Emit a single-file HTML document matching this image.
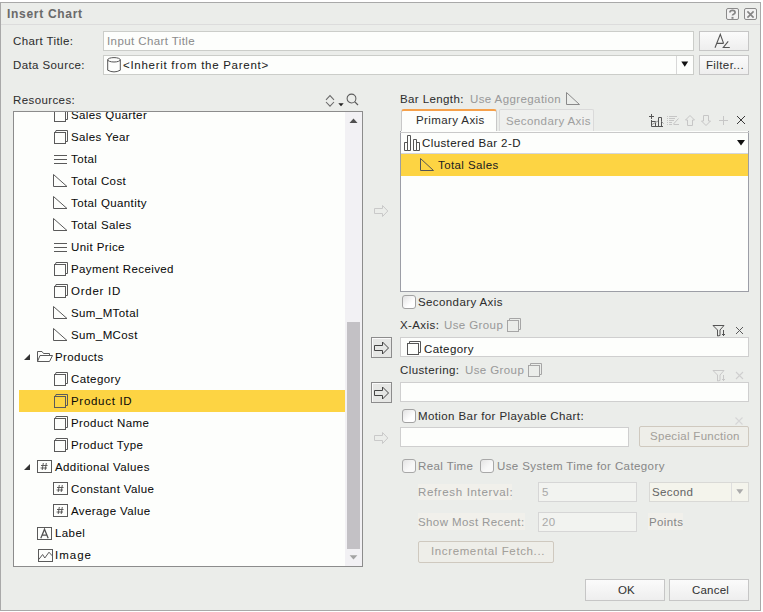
<!DOCTYPE html>
<html><head><meta charset="utf-8">
<style>
html,body{margin:0;padding:0;background:#fff;width:763px;height:612px;overflow:hidden}
body{font-family:"Liberation Sans",sans-serif;font-size:11.5px;letter-spacing:0.4px;color:#2e2e2e;-webkit-text-stroke-width:0.04px;position:relative}
.a{position:absolute}
.t{position:absolute;line-height:14px;white-space:nowrap}
svg{position:absolute;overflow:visible}
#dlg{position:absolute;left:0;top:2px;width:759px;height:607px;border:1px solid #a9a9a9;background:#ebedea}
.inp{position:absolute;background:#fdfefc;border:1px solid #cbcdc9;box-sizing:border-box}
.btn{position:absolute;box-sizing:border-box;border:1px solid #c6c6c6;background:linear-gradient(#fbfbfb,#eeeeee);text-align:center;line-height:20px;color:#333}
.cb{position:absolute;box-sizing:border-box;width:14px;height:14px;border:1px solid #8e8e8e;border-radius:3px;background:linear-gradient(135deg,#e9e9e9,#ffffff)}
.dis{color:#8c8c8c}
</style></head><body>
<div id="dlg"></div>
<!-- title bar -->
<div class="a" style="left:1px;top:24px;width:759px;height:1px;background:#dcdcdc"></div>
<div class="t" style="left:7px;top:7px;font-weight:bold;font-size:12px;letter-spacing:0.7px;color:#6a6a6a">Insert Chart</div>
<!-- help / close -->
<div class="a" style="left:726px;top:8px;width:11px;height:10px;border:1px solid #8a8a8a;border-radius:2px;background:#f2f2f2"></div>
<svg style="left:726px;top:8px" width="13" height="13"><path d="M3.9 4.6Q3.9 2.3 6.5 2.3Q9.1 2.3 9.1 4.4Q9.1 5.6 7.5 6.3Q6.5 6.8 6.5 7.6" fill="none" stroke="#858585" stroke-width="1.7"/><rect x="5.5" y="8.9" width="2" height="1.9" fill="#858585"/></svg>
<div class="a" style="left:744px;top:8px;width:11px;height:10px;border:1px solid #8a8a8a;border-radius:2px;background:#f2f2f2"></div>
<svg style="left:744px;top:8px" width="13" height="13"><path d="M3.4 3.4L9.6 9.6M9.6 3.4L3.4 9.6" stroke="#858585" stroke-width="1.6"/></svg>

<!-- top form -->
<div class="t" style="left:13px;top:34px">Chart Title:</div>
<div class="inp" style="left:103px;top:31px;width:591px;height:20px"></div>
<div class="t dis" style="left:107px;top:34px">Input Chart Title</div>
<div class="btn" style="left:699px;top:31px;width:50px;height:20px"></div>
<svg style="left:699px;top:31px" width="50" height="20"><path d="M16 16.7L21.3 3.2L24.6 12.4M17.4 12.4H24.6M29.2 10.4L24.3 16.5H30.8" stroke="#555" stroke-width="1.1" fill="none"/></svg>

<div class="t" style="left:13px;top:58px">Data Source:</div>
<div class="inp" style="left:103px;top:55px;width:591px;height:20px"></div>
<div class="a" style="left:676px;top:56px;width:1px;height:18px;background:#d8d8d8"></div>
<svg style="left:681px;top:61px" width="10" height="8"><path d="M0.3 0.5H7.2L3.75 5.8Z" fill="#111"/></svg>
<svg style="left:107px;top:57px" width="16" height="16"><ellipse cx="7" cy="2.8" rx="6.3" ry="2.2" fill="none" stroke="#555"/><path d="M0.7 2.8V13.2Q7 16.6 13.3 13.2V2.8" fill="none" stroke="#555"/></svg>
<div class="t" style="left:123px;top:58px;color:#222;letter-spacing:0.72px">&lt;Inherit from the Parent&gt;</div>
<div class="btn" style="left:699px;top:55px;width:50px;height:20px;line-height:18px;padding-left:2px">Filter...</div>

<div class="t" style="left:13px;top:93px">Resources:</div>
<div class="a" style="left:13px;top:111px;width:348px;height:454px;border:1px solid #8c8c8c;background:#fdfefc;overflow:hidden">
<div class="a" style="left:5px;top:278px;width:326px;height:22px;background:#fdd443"></div>
</div>
<div class="a" style="left:14px;top:112px;width:331px;height:454px;overflow:hidden"><div class="a" style="left:-14px;top:-112px;width:763px;height:612px"><svg style="left:54px;top:108px" width="15" height="15"><path d="M1.5 2.2L2 0.5H13.5V11.5H12" fill="none" stroke="#5a5a5a"/><rect x="0.5" y="2.5" width="11" height="11" fill="none" stroke="#5a5a5a"/></svg><div class="t" style="left:71px;top:108px;color:#0a0a0a">Sales Quarter</div><svg style="left:54px;top:130px" width="15" height="15"><path d="M1.5 2.2L2 0.5H13.5V11.5H12" fill="none" stroke="#5a5a5a"/><rect x="0.5" y="2.5" width="11" height="11" fill="none" stroke="#5a5a5a"/></svg><div class="t" style="left:71px;top:130px;color:#0a0a0a">Sales Year</div><svg style="left:54px;top:154px" width="15" height="15"><path d="M0 1.5H13M0 5.5H13M0 9.5H13" stroke="#5a5a5a"/></svg><div class="t" style="left:71px;top:152px;color:#0a0a0a">Total</div><svg style="left:53px;top:174px" width="16" height="15"><path d="M0.5 0.5L0.5 12.5L14 12.5Z" fill="none" stroke="#5a5a5a" stroke-linejoin="miter"/></svg><div class="t" style="left:71px;top:174px;color:#0a0a0a">Total Cost</div><svg style="left:53px;top:196px" width="16" height="15"><path d="M0.5 0.5L0.5 12.5L14 12.5Z" fill="none" stroke="#5a5a5a" stroke-linejoin="miter"/></svg><div class="t" style="left:71px;top:196px;color:#0a0a0a">Total Quantity</div><svg style="left:53px;top:218px" width="16" height="15"><path d="M0.5 0.5L0.5 12.5L14 12.5Z" fill="none" stroke="#5a5a5a" stroke-linejoin="miter"/></svg><div class="t" style="left:71px;top:218px;color:#0a0a0a">Total Sales</div><svg style="left:54px;top:242px" width="15" height="15"><path d="M0 1.5H13M0 5.5H13M0 9.5H13" stroke="#5a5a5a"/></svg><div class="t" style="left:71px;top:240px;color:#0a0a0a">Unit Price</div><svg style="left:54px;top:262px" width="15" height="15"><path d="M1.5 2.2L2 0.5H13.5V11.5H12" fill="none" stroke="#5a5a5a"/><rect x="0.5" y="2.5" width="11" height="11" fill="none" stroke="#5a5a5a"/></svg><div class="t" style="left:71px;top:262px;color:#0a0a0a">Payment Received</div><svg style="left:54px;top:284px" width="15" height="15"><path d="M1.5 2.2L2 0.5H13.5V11.5H12" fill="none" stroke="#5a5a5a"/><rect x="0.5" y="2.5" width="11" height="11" fill="none" stroke="#5a5a5a"/></svg><div class="t" style="left:71px;top:284px;color:#0a0a0a;letter-spacing:0.75px">Order ID</div><svg style="left:53px;top:306px" width="16" height="15"><path d="M0.5 0.5L0.5 12.5L14 12.5Z" fill="none" stroke="#5a5a5a" stroke-linejoin="miter"/></svg><div class="t" style="left:71px;top:306px;color:#0a0a0a">Sum_MTotal</div><svg style="left:53px;top:328px" width="16" height="15"><path d="M0.5 0.5L0.5 12.5L14 12.5Z" fill="none" stroke="#5a5a5a" stroke-linejoin="miter"/></svg><div class="t" style="left:71px;top:328px;color:#0a0a0a">Sum_MCost</div><div class="a" style="left:24px;top:354px;width:0;height:0;border-left:6px solid transparent;border-bottom:6px solid #333"></div><svg style="left:37px;top:350px" width="17" height="14"><path d="M0.5 11.5L0.5 1.5L5 1.5L6.5 3.5L12.5 3.5L12.5 5.5M0.5 11.5L3 5.5L15.5 5.5L12.5 11.5Z" fill="none" stroke="#5a5a5a"/></svg><div class="t" style="left:55px;top:350px;color:#0a0a0a">Products</div><svg style="left:54px;top:372px" width="15" height="15"><path d="M1.5 2.2L2 0.5H13.5V11.5H12" fill="none" stroke="#5a5a5a"/><rect x="0.5" y="2.5" width="11" height="11" fill="none" stroke="#5a5a5a"/></svg><div class="t" style="left:71px;top:372px;color:#0a0a0a">Category</div><svg style="left:54px;top:394px" width="15" height="15"><path d="M1.5 2.2L2 0.5H13.5V11.5H12" fill="none" stroke="#5a5a5a"/><rect x="0.5" y="2.5" width="11" height="11" fill="none" stroke="#5a5a5a"/></svg><div class="t" style="left:71px;top:394px;color:#0a0a0a;letter-spacing:0.7px">Product ID</div><svg style="left:54px;top:416px" width="15" height="15"><path d="M1.5 2.2L2 0.5H13.5V11.5H12" fill="none" stroke="#5a5a5a"/><rect x="0.5" y="2.5" width="11" height="11" fill="none" stroke="#5a5a5a"/></svg><div class="t" style="left:71px;top:416px;color:#0a0a0a">Product Name</div><svg style="left:54px;top:438px" width="15" height="15"><path d="M1.5 2.2L2 0.5H13.5V11.5H12" fill="none" stroke="#5a5a5a"/><rect x="0.5" y="2.5" width="11" height="11" fill="none" stroke="#5a5a5a"/></svg><div class="t" style="left:71px;top:438px;color:#0a0a0a">Product Type</div><div class="a" style="left:24px;top:464px;width:0;height:0;border-left:6px solid transparent;border-bottom:6px solid #333"></div><svg style="left:37px;top:460px" width="16" height="14"><rect x="0.5" y="0.5" width="14" height="12" fill="none" stroke="#5a5a5a"/><path d="M6.3 3L5.2 10M9.3 3L8.2 10M4 5.5H10.5M3.6 8H10" fill="none" stroke="#555" stroke-width="0.95"/></svg><div class="t" style="left:55px;top:460px;color:#0a0a0a">Additional Values</div><svg style="left:53px;top:482px" width="16" height="14"><rect x="0.5" y="0.5" width="14" height="12" fill="none" stroke="#5a5a5a"/><path d="M6.3 3L5.2 10M9.3 3L8.2 10M4 5.5H10.5M3.6 8H10" fill="none" stroke="#555" stroke-width="0.95"/></svg><div class="t" style="left:71px;top:482px;color:#0a0a0a">Constant Value</div><svg style="left:53px;top:504px" width="16" height="14"><rect x="0.5" y="0.5" width="14" height="12" fill="none" stroke="#5a5a5a"/><path d="M6.3 3L5.2 10M9.3 3L8.2 10M4 5.5H10.5M3.6 8H10" fill="none" stroke="#555" stroke-width="0.95"/></svg><div class="t" style="left:71px;top:504px;color:#0a0a0a">Average Value</div><svg style="left:37px;top:527px" width="16" height="14"><rect x="0.5" y="0.5" width="14" height="12" fill="none" stroke="#5a5a5a"/><path d="M3.8 11.2L7.5 2.2L11.2 11.2M5.1 8.2H9.9" fill="none" stroke="#505050" stroke-width="1.25"/></svg><div class="t" style="left:55px;top:526px;color:#0a0a0a">Label</div><svg style="left:38px;top:549px" width="16" height="14"><rect x="0.5" y="0.5" width="14" height="12" fill="none" stroke="#5a5a5a"/><path d="M0.8 10.5L4.6 5.5L6.8 9L11 3.2L14.2 6.8" fill="none" stroke="#5a5a5a"/></svg><div class="t" style="left:55px;top:548px;color:#0a0a0a;letter-spacing:1.0px">Image</div></div></div>
<div class="a" style="left:345px;top:112px;width:17px;height:454px;background:#f2f1f4"></div>
<div class="a" style="left:347px;top:322px;width:13px;height:227px;background:#c3c1c5"></div>
<svg style="left:349px;top:118px" width="9" height="6"><path d="M0.5 5L4.5 0.5L8.5 5Z" fill="#505050"/></svg>
<svg style="left:349px;top:555px" width="9" height="6"><path d="M0.6 0.2H8.4L4.5 4.4Z" fill="#a3a3a3"/></svg>
<svg style="left:325px;top:94px" width="11" height="13"><path d="M1 5.8L5 1.6L9 5.8M1 8L5 12.2L9 8" fill="none" stroke="#6a6a6a" stroke-width="1.05"/></svg>
<svg style="left:338px;top:103px" width="7" height="4"><path d="M0.3 0.3H5.7L3 3.2Z" fill="#222"/></svg>
<svg style="left:346px;top:93px" width="14" height="14"><circle cx="5.5" cy="5.5" r="4.4" fill="none" stroke="#5c5c5c" stroke-width="1.05"/><path d="M8.6 8.6L12 12" stroke="#5c5c5c" stroke-width="1.2"/></svg>
<div class="t" style="left:400px;top:92px;">Bar Length:</div>
<div class="t" style="left:470px;top:92px;color:#9a9a9a">Use Aggregation</div>
<svg style="left:566px;top:92px" width="15" height="14"><path d="M0.5 0.5L0.5 12.5L13.5 12.5Z" fill="none" stroke="#8a8a8a"/></svg>
<div class="a" style="left:499px;top:109px;width:95px;height:23px;box-sizing:border-box;border:1px solid #dadada;border-bottom:none;background:#eff0ee;border-radius:2px 2px 0 0"></div>
<div class="t" style="left:506px;top:114px;color:#a0a0a0">Secondary Axis</div>
<div class="a" style="left:401px;top:109px;width:96px;height:23px;box-sizing:border-box;border:1px solid #c8c8c8;border-top:2px solid #f6a14b;border-bottom:none;background:#fdfefc;border-radius:3px 3px 0 0"></div>
<div class="t" style="left:416px;top:113px;">Primary Axis</div>
<svg style="left:647px;top:112px" width="18" height="16"><path d="M2 4.5H7M4.5 2V7M4.5 8V14.5H16M4.5 9.5H8.5V14M11.5 14V5.5H14.5V14" fill="none" stroke="#555"/><path d="M5 12.5L11 9M14.5 9.5L16.5 11.5" fill="none" stroke="#999"/></svg>
<svg style="left:666px;top:115px" width="14" height="11"><path d="M1 1.5H2M3 1.5H11M1 3.5H2M3 3.5H9M1 5.5H2M3 5.5H8M1 7.5H2M3 7.5H6M1 9.5H2M3 9.5H6M7.5 9.5H13M7.5 9L12.5 3.5" fill="none" stroke="#c6c6c6"/></svg>
<svg style="left:685px;top:115px" width="10" height="12"><path d="M5 0.5L9.5 5H7.5V10.5H2.5V5H0.5Z" fill="none" stroke="#c6c6c6"/></svg>
<svg style="left:701px;top:115px" width="10" height="12"><path d="M5 10.5L9.5 6H7.5V0.5H2.5V6H0.5Z" fill="none" stroke="#c6c6c6"/></svg>
<svg style="left:718px;top:115px" width="11" height="11"><path d="M5.5 1V10M1 5.5H10" stroke="#c6c6c6"/></svg>
<svg style="left:736px;top:115px" width="10" height="10"><path d="M1 1L9 9M9 1L1 9" stroke="#3a3a3a" stroke-width="1"/></svg>
<div class="a" style="left:400px;top:131px;width:349px;height:161px;box-sizing:border-box;border:1px solid #9c9ea6;border-top:none;background:#fdfefc"></div>
<div class="a" style="left:400px;top:132px;width:349px;height:1px;background:#c9c9c9"></div>
<div class="a" style="left:401px;top:153px;width:347px;height:1px;background:#d3d6dc"></div>
<svg style="left:402px;top:133px" width="20" height="20"><path d="M2.5 17.5V9.5H5.5V17.5ZM5.5 17.5V2.5H8.5V17.5ZM11.5 17.5V6.5H14.5V17.5ZM14.5 17.5V9.5H17.5V17.5Z" fill="none" stroke="#555"/></svg>
<div class="t" style="left:422px;top:136px;color:#222">Clustered Bar 2-D</div>
<svg style="left:737px;top:140px" width="8" height="6"><path d="M0 0H8L4 5.5Z" fill="#111"/></svg>
<div class="a" style="left:401px;top:154px;width:347px;height:22px;background:#fdd443"></div>
<svg style="left:420px;top:158px" width="15" height="14"><path d="M0.5 0.5L0.5 12.5L13.5 12.5Z" fill="none" stroke="#555"/></svg>
<div class="t" style="left:438px;top:158px;color:#222">Total Sales</div>
<svg style="left:373px;top:203px" width="17" height="16"><path d="M1.5 5.5H9.5V2.5L14.8 8L9.5 13.5V10.5H1.5Z" fill="none" stroke="#c9c9c9" stroke-linejoin="miter"/></svg>
<div class="a" style="left:402px;top:295px;width:14px;height:14px;box-sizing:border-box;border:1px solid #a2a2a2;border-radius:3px;background:linear-gradient(135deg,#e2e2e2,#ffffff 65%)"></div>
<div class="t" style="left:418px;top:295px;">Secondary Axis</div>
<div class="t" style="left:400px;top:318px;">X-Axis:</div>
<div class="t" style="left:444px;top:318px;color:#9a9a9a">Use Group</div>
<svg style="left:507px;top:318px" width="15" height="15"><path d="M2.5 2.5L2.5 0.5L13.5 0.5L13.5 11.5L11.5 11.5" fill="none" stroke="#a6a6a6"/><rect x="0.5" y="2.5" width="11" height="11" fill="none" stroke="#a6a6a6"/></svg>
<svg style="left:712px;top:324px" width="15" height="13"><path d="M1 1.5H12L8 6V11.5L5.5 12V6Z" fill="none" stroke="#555" stroke-linejoin="round"/><path d="M11.5 6V12M10 10L11.5 11.5L13 10" fill="none" stroke="#555"/></svg>
<svg style="left:735px;top:326px" width="10" height="10"><path d="M1 1L8 8M8 1L1 8" stroke="#5a5a5a" stroke-width="1"/></svg>
<div class="a" style="left:371px;top:337px;width:21px;height:21px;box-sizing:border-box;border:1px solid #8c8c8c;background:#e6e7e5;box-shadow:inset 1px 1px 0 #fafafa"></div>
<svg style="left:373px;top:340px" width="17" height="16"><path d="M1.5 5.5H9.5V2L15.5 8L9.5 14V10.5H1.5Z" fill="none" stroke="#444" stroke-linejoin="miter"/></svg>
<div class="a" style="left:400px;top:337px;width:349px;height:20px;box-sizing:border-box;border:1px solid #cfcfcf;background:#fdfefc"></div>
<svg style="left:407px;top:341px" width="15" height="15"><path d="M2.5 2.5L2.5 0.5L13.5 0.5L13.5 11.5L11.5 11.5" fill="none" stroke="#555"/><rect x="0.5" y="2.5" width="11" height="11" fill="none" stroke="#555"/></svg>
<div class="t" style="left:424px;top:342px;color:#222">Category</div>
<div class="t" style="left:400px;top:363px;">Clustering:</div>
<div class="t" style="left:465px;top:363px;color:#9a9a9a">Use Group</div>
<svg style="left:528px;top:363px" width="15" height="15"><path d="M2.5 2.5L2.5 0.5L13.5 0.5L13.5 11.5L11.5 11.5" fill="none" stroke="#a6a6a6"/><rect x="0.5" y="2.5" width="11" height="11" fill="none" stroke="#a6a6a6"/></svg>
<svg style="left:712px;top:369px" width="15" height="13"><path d="M1 1.5H12L8 6V11.5L5.5 12V6Z" fill="none" stroke="#c8c8c8" stroke-linejoin="round"/><path d="M11.5 6V12M10 10L11.5 11.5L13 10" fill="none" stroke="#c8c8c8"/></svg>
<svg style="left:735px;top:371px" width="10" height="10"><path d="M1 1L8 8M8 1L1 8" stroke="#cfcfcf" stroke-width="1.1"/></svg>
<div class="a" style="left:371px;top:382px;width:21px;height:21px;box-sizing:border-box;border:1px solid #8c8c8c;background:#e6e7e5;box-shadow:inset 1px 1px 0 #fafafa"></div>
<svg style="left:373px;top:385px" width="17" height="16"><path d="M1.5 5.5H9.5V2L15.5 8L9.5 14V10.5H1.5Z" fill="none" stroke="#444" stroke-linejoin="miter"/></svg>
<div class="a" style="left:400px;top:382px;width:349px;height:20px;box-sizing:border-box;border:1px solid #cfcfcf;background:#fdfefc"></div>
<div class="a" style="left:402px;top:409px;width:14px;height:14px;box-sizing:border-box;border:1px solid #a2a2a2;border-radius:3px;background:linear-gradient(135deg,#e2e2e2,#ffffff 65%)"></div>
<div class="t" style="left:418px;top:409px;">Motion Bar for Playable Chart:</div>
<svg style="left:735px;top:417px" width="9" height="8"><path d="M0.5 0.5L7.5 7.5M7.5 0.5L0.5 7.5" stroke="#d6d6d6" stroke-width="1.1"/></svg>
<svg style="left:373px;top:430px" width="17" height="16"><path d="M1.5 5.5H9.5V2.5L14.8 8L9.5 13.5V10.5H1.5Z" fill="none" stroke="#c9c9c9" stroke-linejoin="miter"/></svg>
<div class="a" style="left:400px;top:427px;width:229px;height:20px;box-sizing:border-box;border:1px solid #cfcfcf;background:#fdfefc"></div>
<div class="a" style="left:639px;top:426px;width:110px;height:21px;box-sizing:border-box;border:1px solid #cfc9bf;border-radius:2px;background:#eeeee9"></div>
<div class="t" style="left:650px;top:429px;color:#a3a09a;letter-spacing:0.3px">Special Function</div>
<div class="a" style="left:402px;top:459px;width:14px;height:14px;box-sizing:border-box;border:1px solid #a8a8a8;border-radius:3px;background:linear-gradient(135deg,#e4e4e4,#f8f8f8 60%)"></div>
<div class="t" style="left:418px;top:459px;color:#888">Real Time</div>
<div class="a" style="left:480px;top:459px;width:14px;height:14px;box-sizing:border-box;border:1px solid #a8a8a8;border-radius:3px;background:linear-gradient(135deg,#e4e4e4,#f8f8f8 60%)"></div>
<div class="t" style="left:497px;top:459px;color:#888">Use System Time for Category</div>
<div class="a" style="left:418px;top:484px;width:94px;height:16px;background:#f1f0eb"></div>
<div class="t" style="left:418px;top:485px;color:#9a9a9a;letter-spacing:0.65px">Refresh Interval:</div>
<div class="a" style="left:538px;top:482px;width:99px;height:20px;box-sizing:border-box;border:1px solid #d6d6d6;background:#f2f3f0"></div>
<div class="t" style="left:542px;top:485px;color:#aaa">5</div>
<div class="a" style="left:649px;top:482px;width:100px;height:20px;box-sizing:border-box;border:1px solid #d9d9d6;background:#f4f4ec"></div>
<div class="a" style="left:731px;top:483px;width:1px;height:18px;background:#dedede"></div>
<div class="t" style="left:652px;top:485px;color:#666">Second</div>
<svg style="left:736px;top:489px" width="9" height="6"><path d="M0.3 0.3H7.3L3.8 4.9Z" fill="#ababab"/></svg>
<div class="a" style="left:418px;top:513px;width:107px;height:17px;background:#f1f0eb"></div>
<div class="t" style="left:418px;top:515px;color:#9a9a9a">Show Most Recent:</div>
<div class="a" style="left:538px;top:512px;width:99px;height:20px;box-sizing:border-box;border:1px solid #d6d6d6;background:#f2f3f0"></div>
<div class="t" style="left:542px;top:515px;color:#aaa">20</div>
<div class="a" style="left:648px;top:513px;width:35px;height:17px;background:#f1f0eb"></div>
<div class="t" style="left:649px;top:515px;color:#888">Points</div>
<div class="a" style="left:418px;top:541px;width:136px;height:22px;box-sizing:border-box;border:1px solid #cfc9bf;border-radius:2px;background:#eeeee9"></div>
<div class="t" style="left:431px;top:544px;color:#a3a09a;letter-spacing:0.62px">Incremental Fetch...</div>
<div class="a" style="left:585px;top:579px;width:80px;height:22px;box-sizing:border-box;border:1px solid #c6c6c6;background:linear-gradient(#fbfbfb,#eeeeee)"></div>
<div class="t" style="left:618px;top:583px;color:#333;letter-spacing:0">OK</div>
<div class="a" style="left:669px;top:579px;width:80px;height:22px;box-sizing:border-box;border:1px solid #c6c6c6;background:linear-gradient(#fbfbfb,#eeeeee)"></div>
<div class="t" style="left:692px;top:583px;color:#333;letter-spacing:0.2px">Cancel</div>
</body></html>
